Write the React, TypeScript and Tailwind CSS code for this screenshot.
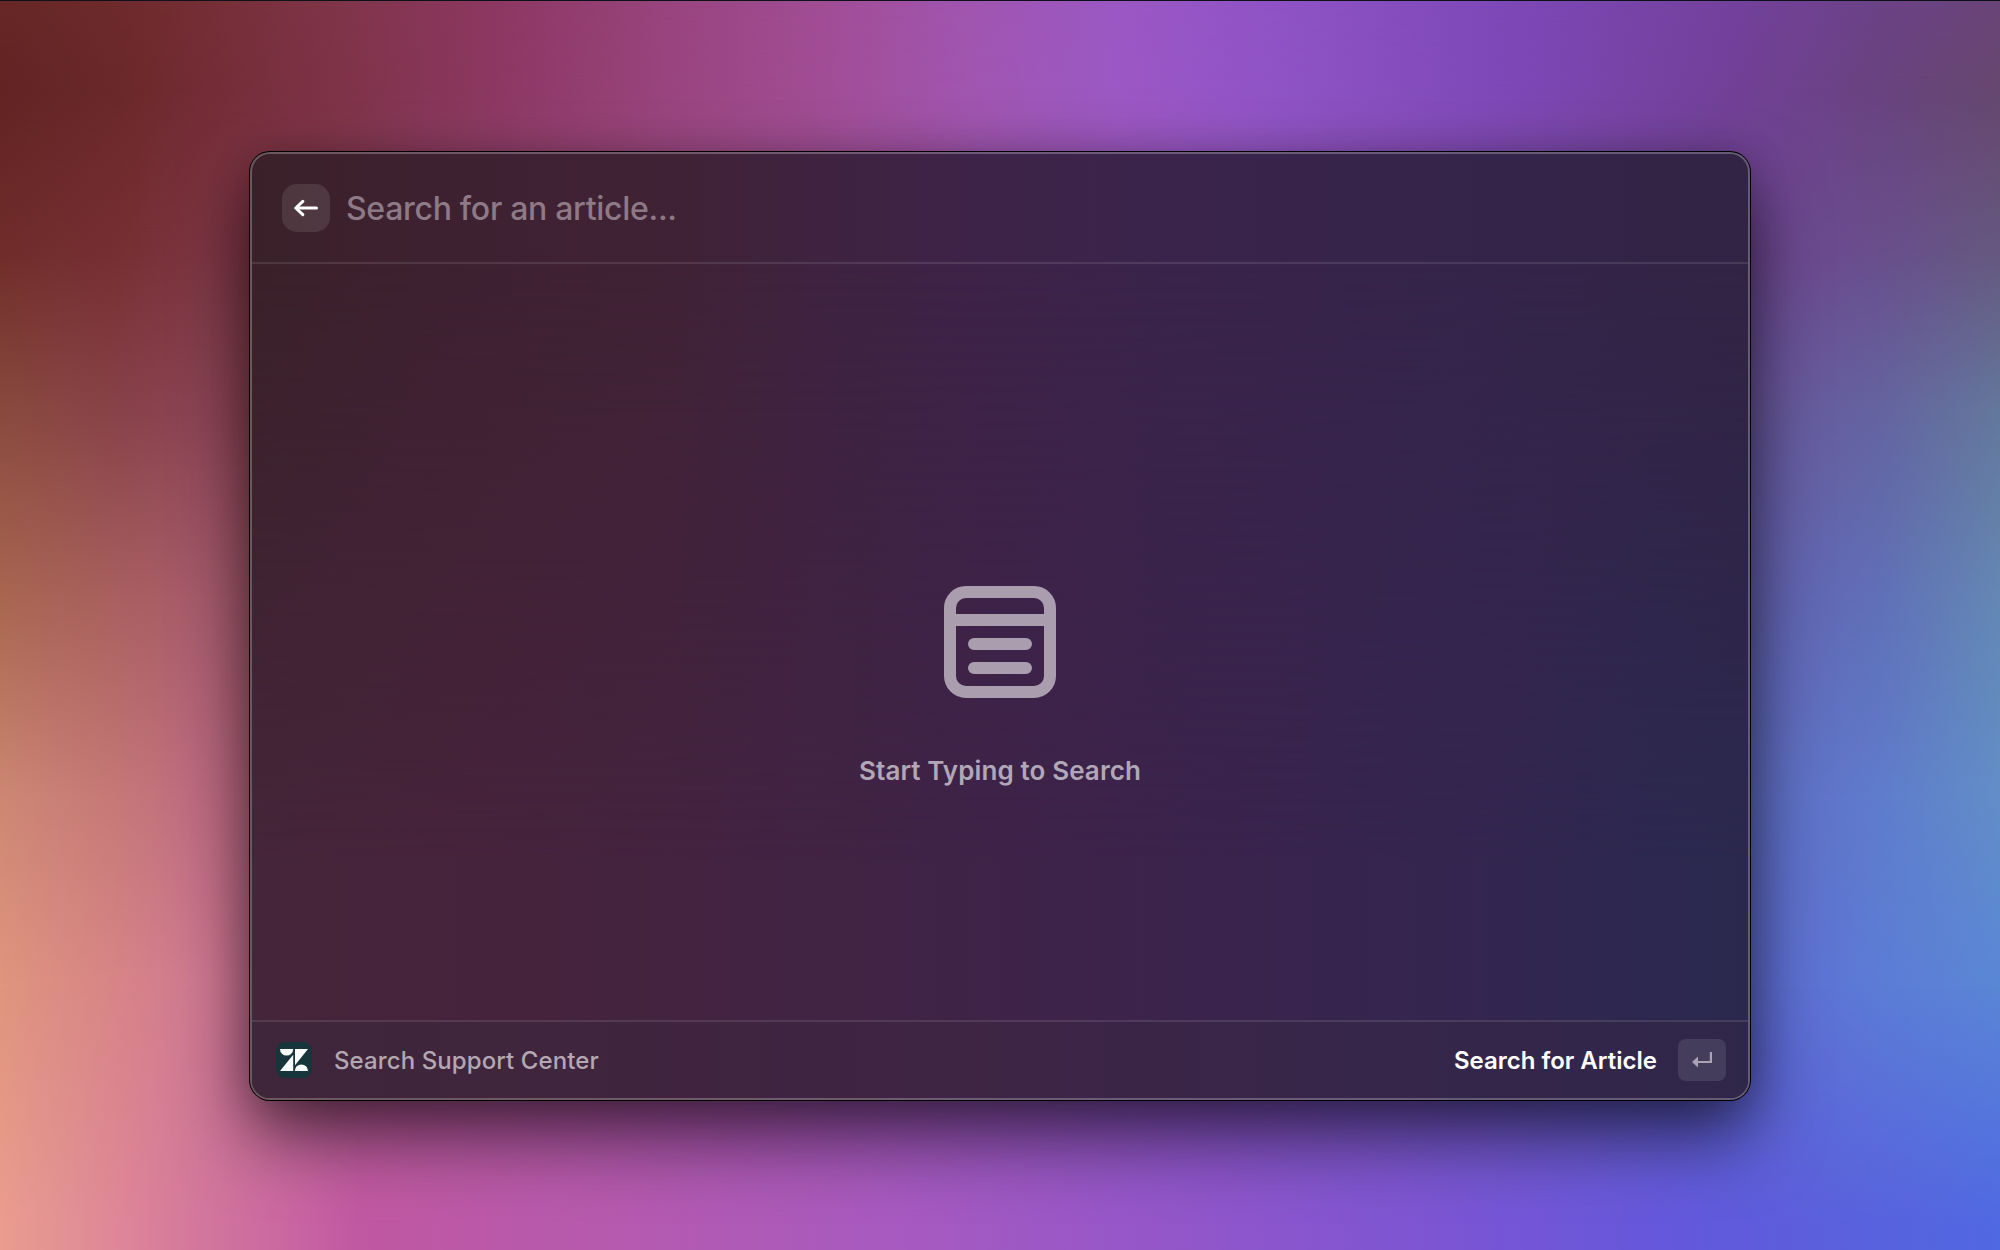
import React from "react";

const fade = "absolute inset-0";

function Wallpaper() {
  return (
    <div className="absolute inset-0 overflow-hidden">
      <div className={`${fade} bg-[linear-gradient(90deg,#672726_0%,#6e2a2c_6%,#752e35_10%,#80354a_17%,#8d3863_25%,#98447d_33%,#a24e98_42%,#a056b2_49%,#9b58c4_56%,#8f53c6_64%,#7e48b8_75%,#73419c_87%,#6b4286_94%,#6a4478_100%)]`} />
      <div className={`${fade} bg-[linear-gradient(90deg,#632323_0%,#6b282a_6%,#732c35_10%,#7e3347_17%,#8c3863_25%,#98447d_33%,#a24e98_42%,#a056b2_49%,#9b58c4_56%,#8f53c6_64%,#7e48b8_75%,#714096_87%,#69437f_94%,#66476e_100%)] [mask-image:linear-gradient(180deg,transparent_0%,black_7%)]`} />
      <div className={`${fade} bg-[linear-gradient(90deg,#6f2c2a_0%,#762f33_6%,#7c3541_10%,#904468_22%,#9c4b80_34%,#9858bc_60%,#6f4592_86%,#694e8c_94%,#65587f_100%)] [mask-image:linear-gradient(180deg,transparent_7%,black_20%)]`} />
      <div className={`${fade} bg-[linear-gradient(90deg,#8a4a3e_0%,#88424a_6%,#8c4454_10%,#984674_30%,#7c50b0_60%,#6a549c_86%,#6464a0_94%,#64789c_100%)] [mask-image:linear-gradient(180deg,transparent_20%,black_33%)]`} />
      <div className={`${fade} bg-[linear-gradient(90deg,#a96650_0%,#a96060_6%,#a85c6c_10%,#a0508c_34%,#7c54bc_60%,#6460b0_87%,#6070b8_94%,#6488b4_100%)] [mask-image:linear-gradient(180deg,transparent_33%,black_48%)]`} />
      <div className={`${fade} bg-[linear-gradient(90deg,#cd8874_0%,#c57878_6%,#bf6c82_10%,#ac549c_34%,#7c54c4_60%,#606cc4_87%,#5f7ccc_94%,#628ec8_100%)] [mask-image:linear-gradient(180deg,transparent_48%,black_64%)]`} />
      <div className={`${fade} bg-[linear-gradient(90deg,#df957e_0%,#d88488_6%,#d07a92_10%,#c0609c_20%,#ac54a8_34%,#8454c8_60%,#5f6ad2_87%,#5c7cd6_94%,#5a86d6_100%)] [mask-image:linear-gradient(180deg,transparent_64%,black_79%)]`} />
      <div className={`${fade} bg-[linear-gradient(90deg,#eb9c8d_0%,#e39294_3%,#de8698_6%,#d2779c_10%,#c864a2_15%,#c058a2_18%,#b65aae_30%,#a75ac0_45%,#9156ca_60%,#7a55d4_73%,#6358dc_84%,#5a60dc_92%,#5068e2_100%)] [mask-image:linear-gradient(180deg,transparent_79%,black_98%)]`} />
      <div className="absolute inset-x-0 top-0 h-px bg-[#0d1219]" />
    </div>
  );
}

function BackArrow() {
  return (
    <svg width="24" height="18" viewBox="0 0 24 18" fill="none" stroke="white" strokeWidth="3" strokeLinecap="round" strokeLinejoin="round">
      <path d="M22.5 9H1.8M8.8 2.4 1.8 9 8.8 15.6" />
    </svg>
  );
}

function ArticleIcon() {
  return (
    <svg width="112" height="112" viewBox="0 0 112 112" fill="none" stroke="#a99dae" strokeWidth="12">
      <rect x="6" y="6" width="100" height="100" rx="16" />
      <path d="M12 34H100" />
      <path d="M30 58H82M30 82H82" strokeLinecap="round" />
    </svg>
  );
}

function SupportLogo() {
  return (
    <div className="flex size-9 items-center justify-center rounded-[9px] bg-[#17363b]">
      <svg width="28" height="22" viewBox="0 0 28 22" fill="#fbfbf9">
        <path d="M0 0H13.2A6.6 6.6 0 0 1 0 0Z" />
        <path d="M13.2 5.8V22H0Z" />
        <path d="M15 0H28L15 16.2Z" />
        <path d="M14.8 22A6.6 6.6 0 0 1 28 22Z" />
      </svg>
    </div>
  );
}

function ReturnIcon() {
  return (
    <svg width="20" height="16" viewBox="0 0 20 16" fill="none">
      <path d="M18.9 0V10H5" stroke="#aaa4b4" strokeWidth="2.2" />
      <path d="M0 10 6 4.6V15.4Z" fill="#aaa4b4" />
    </svg>
  );
}

export default function App() {
  return (
    <div className="relative flex h-[1250px] w-[2000px] justify-center overflow-hidden pt-[152px] font-['Inter',sans-serif]">
      <Wallpaper />
      <main className="relative flex h-[948px] w-[1500px] flex-col overflow-hidden rounded-[20px] border-2 border-white/25 bg-[#3b2344] bg-[linear-gradient(90deg,#3a2129_0%,#3e2130_12%,#402236_28%,#3e2347_46%,#3a244b_62%,#35244a_82%,#322444_100%)] bg-origin-border shadow-[0_0_0_1px_#000,0_36px_72px_rgba(0,0,0,0.6),0_4px_40px_rgba(0,0,0,0.2)]">
        <div className="absolute inset-0 bg-[linear-gradient(90deg,#45253a_0%,#46233c_15%,#432340_30%,#3e2349_52%,#38244e_70%,#322650_84%,#2c2850_94%,#2b284e_100%)] [mask-image:linear-gradient(180deg,transparent_12%,black_75%)]" />
        <header className="relative flex h-[110px] shrink-0 items-center gap-4 border-b-2 border-white/10 pl-[30px]">
          <button className="flex size-12 items-center justify-center rounded-[15px] bg-white/10" aria-label="Back">
            <BackArrow />
          </button>
          <span className="pt-0.5 text-[32px] leading-10 font-[450] tracking-[-0.3px] text-[#8d7a86]">Search for an article...</span>
        </header>
        <section className="relative flex flex-1 flex-col items-center pt-[322px]">
          <ArticleIcon />
          <p className="mt-[55px] text-[26px] leading-9 font-semibold tracking-[0.1px] text-[#b1a7b6]">Start Typing to Search</p>
        </section>
        <footer className="relative flex h-[78px] shrink-0 items-center justify-between border-t-2 border-white/10 bg-[linear-gradient(90deg,#3f263a_0%,#40243f_30%,#3c2546_55%,#36264a_75%,#2f274a_100%)] pr-[22px] pl-6">
          <div className="flex items-center gap-[22px]">
            <SupportLogo />
            <span className="pt-0.5 text-2xl font-medium tracking-[0.1px] text-[#b3a7b2]">Search Support Center</span>
          </div>
          <div className="flex items-center gap-[21px]">
            <span className="pt-0.5 text-2xl font-semibold text-white">Search for Article</span>
            <kbd className="flex h-[42px] w-12 items-center justify-center rounded-lg bg-white/10">
              <ReturnIcon />
            </kbd>
          </div>
        </footer>
      </main>
    </div>
  );
}
